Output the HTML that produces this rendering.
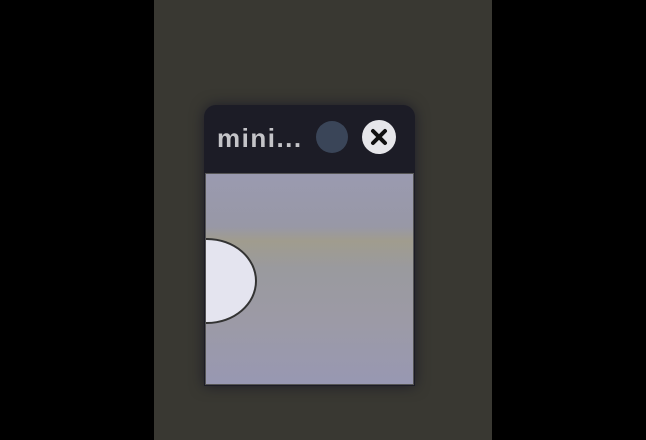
<!DOCTYPE html><html><head><style>
body{margin:0;width:646px;height:440px;background:#000;position:relative;overflow:hidden;font-family:"Liberation Sans",sans-serif}
.mid{position:absolute;left:154px;top:0;width:338px;height:440px;background:#393832}
.win{position:absolute;left:204px;top:105px;width:211px;height:281px;background:#1c1c26;border-radius:12px 12px 0 0;box-shadow:0 0 14px rgba(0,0,30,.5)}
.t{position:absolute;left:13px;top:18px;color:#c4c4c8;font-weight:bold;font-size:26px;letter-spacing:1.5px}
.dot{position:absolute;left:112px;top:16px;width:32px;height:32px;border-radius:50%;background:#3a4558}
.x{position:absolute;left:158px;top:15px;width:34px;height:34px;border-radius:50%;background:#e6e6ea}
.c{position:absolute;left:1px;top:68px;width:209px;height:212px;background:linear-gradient(#9a9ab0 0%,#9898a6 25%,#a09c8e 32%,#9a9a9e 45%,#9c9aa6 70%,#9898b2 100%);overflow:hidden;border:1px solid #555;box-sizing:border-box}
.b{position:absolute;left:-49px;top:64px;width:96px;height:82px;border-radius:50%;background:#e4e4ef;border:2px solid #333}
</style></head><body><div class="mid"></div>
<div class="win"><div class="t">mini...</div><div class="dot"></div>
<div class="x"><svg width="34" height="34"><path d="M11 11L23 23M23 11L11 23" stroke="#111" stroke-width="4" stroke-linecap="round"/></svg></div>
<div class="c"><div class="b"></div></div></div>
</body></html>
